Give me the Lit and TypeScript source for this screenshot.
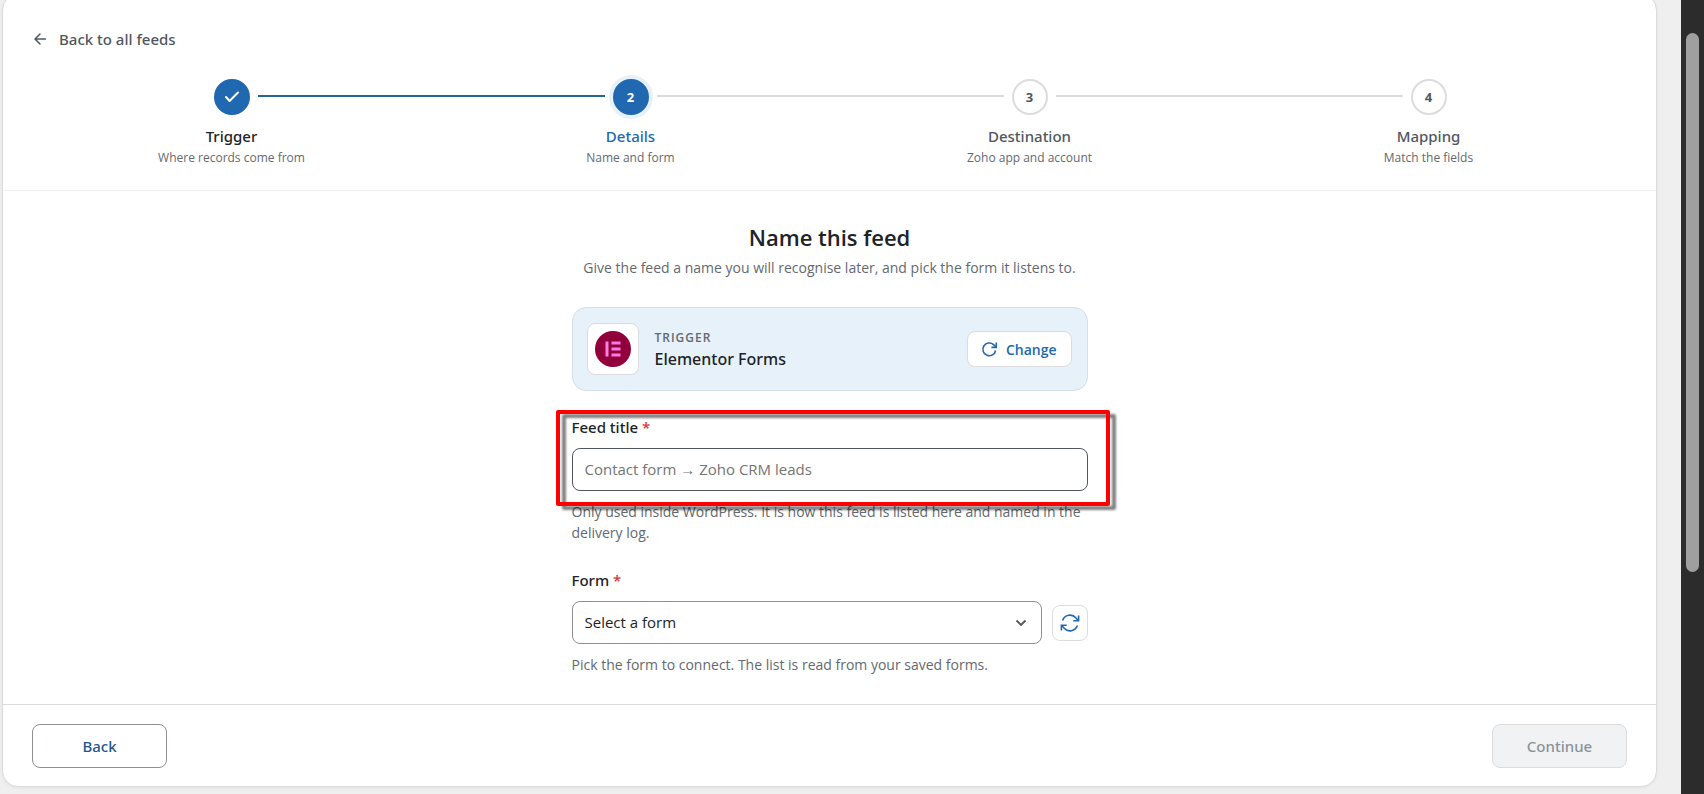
import { LitElement, html, css, nothing } from "lit";
import { customElement } from "lit/decorators.js";
import { classMap } from "lit/directives/class-map.js";

interface Step {
  title: string;
  hint: string;
  state: "done" | "current" | "todo";
}

const STEPS: Step[] = [
  { title: "Trigger", hint: "Where records come from", state: "done" },
  { title: "Details", hint: "Name and form", state: "current" },
  { title: "Destination", hint: "Zoho app and account", state: "todo" },
  { title: "Mapping", hint: "Match the fields", state: "todo" },
];

@customElement("feed-steps")
class FeedSteps extends LitElement {
  static styles = css`
    :host { display: block; }
    .steps {
      display: grid;
      grid-template-columns: repeat(4, 1fr);
      margin: 0;
      padding: 0;
      list-style: none;
    }
    .step {
      display: grid;
      grid-template-columns: 1fr 36px 1fr;
      column-gap: 8px;
      justify-items: center;
      text-align: center;
    }
    .line {
      width: 100%;
      height: 2px;
      margin-top: 16px;
      background: #dcdcde;
    }
    .line.none { background: none; }
    .line.done { background: #256696; }
    .dot {
      box-sizing: border-box;
      display: flex;
      align-items: center;
      justify-content: center;
      width: 36px;
      height: 36px;
      border: 2px solid #dcdcde;
      border-radius: 50%;
      background: #fff;
      color: #50575e;
      font-size: 13px;
      font-weight: 700;
    }
    .done .dot, .current .dot {
      border-color: #2068b0;
      background: #2068b0;
      color: #fff;
    }
    .current .dot { box-shadow: 0 0 0 4px #e6f1fa; }
    .title, .hint { grid-column: 1 / -1; }
    .title {
      margin-top: 10px;
      font-family: "Noto Sans", sans-serif;
      font-size: 15px;
      font-weight: 500;
      line-height: 22px;
      color: #50575e;
    }
    .done .title { color: #1d2327; }
    .current .title { color: #2068b0; }
    .hint {
      font-size: 12px;
      line-height: 22px;
      color: #646970;
    }
  `;

  render() {
    return html`<ol class="steps">
      ${STEPS.map((s, i) => {
        const left = { line: true, none: i === 0, done: i > 0 && STEPS[i - 1].state === "done" };
        const right = { line: true, none: i === STEPS.length - 1, done: s.state === "done" };
        return html`<li
          class=${classMap({ step: true, [s.state]: true })}
          aria-current=${s.state === "current" ? "step" : nothing}
        >
          <span class=${classMap(left)}></span>
          <span class="dot">
            ${s.state === "done"
              ? html`<svg width="18" height="18" viewBox="0 0 18 18" fill="none" stroke="currentColor" stroke-width="2" stroke-linecap="round" stroke-linejoin="round"><path d="M3 9l3.600 4L15 4.500" /></svg>`
              : i + 1}
          </span>
          <span class=${classMap(right)}></span>
          <span class="title">${s.title}</span>
          <span class="hint">${s.hint}</span>
        </li>`;
      })}
    </ol>`;
  }
}

@customElement("app-root")
class AppRoot extends LitElement {
  static styles = css`
    :host {
      display: block;
      font-family: "Open Sans", "Noto Sans", sans-serif;
      font-size: 14px;
      color: #1d2327;
    }
    * { box-sizing: border-box; }
    button, input, select { font: inherit; }
    .page {
      display: flex;
      height: 100vh;
      overflow: hidden;
      background: #efefef;
    }
    .content {
      flex: 1;
      min-width: 0;
      margin-top: -6px;
      padding: 0 24px 0 2px;
    }
    .track {
      flex: none;
      width: 23px;
      padding: 33px 5px 0;
      background: #2c2c2c;
    }
    .thumb {
      height: 539px;
      border-radius: 7px;
      background: #9f9f9f;
    }
    .card {
      border: 1px solid #dcdcde;
      border-radius: 16px;
      background: #fff;
      box-shadow: 0 1px 3px rgba(0, 0, 0, 0.06);
    }
    .head {
      padding: 32px 28px 21px 29px;
      border-bottom: 1px solid #f0f0f1;
    }
    .back-link {
      display: inline-flex;
      align-items: center;
      gap: 10px;
      height: 24px;
      margin-bottom: 28px;
      color: #50575e;
      font-family: "Noto Sans", sans-serif;
      font-size: 15px;
      font-weight: 500;
      line-height: 24px;
      text-decoration: none;
    }
    .body {
      display: flex;
      flex-direction: column;
      width: 100%;
      max-width: 516px;
      margin: 0 auto;
      padding: 29px 0;
    }
    h1 {
      margin: 0;
      font-size: 22px;
      font-weight: 600;
      line-height: 34px;
      text-align: center;
    }
    .lead {
      margin: 3px 0 28px;
      line-height: 22px;
      text-align: center;
      color: #646970;
    }
    .trigger {
      display: flex;
      align-items: center;
      gap: 16px;
      margin-bottom: 25px;
      padding: 15px 15px 15px 14px;
      border: 1px solid #d5dfe9;
      border-radius: 14px;
      background: #e6f1fa;
    }
    .logo {
      display: flex;
      align-items: center;
      justify-content: center;
      width: 52px;
      height: 52px;
      border: 1px solid #dcdcde;
      border-radius: 8px;
      background: #fff;
    }
    .names { flex: 1; }
    .kicker {
      font-size: 12px;
      font-weight: 600;
      line-height: 20px;
      letter-spacing: 1px;
      color: #646970;
    }
    .name {
      font-family: "Noto Sans", sans-serif;
      font-size: 16px;
      font-weight: 500;
      line-height: 22px;
    }
    .change, .refresh {
      display: flex;
      align-items: center;
      justify-content: center;
      height: 36px;
      border: 1px solid #dcdcde;
      border-radius: 8px;
      background: #fff;
      color: #2068b0;
    }
    .change {
      gap: 8px;
      padding: 0 14px 0 13px;
      font-weight: 600;
    }
    .refresh {
      flex: none;
      width: 36px;
      padding: 0;
    }
    .label {
      display: block;
      margin-bottom: 10px;
      font-family: "Noto Sans", sans-serif;
      font-size: 15px;
      font-weight: 500;
      line-height: 22px;
    }
    .req { color: #d63638; }
    .highlight { position: relative; }
    .marker {
      position: absolute;
      inset: -6px -22px -15px -16px;
      border: 4px solid #fe0000;
      border-radius: 2px;
      filter: drop-shadow(6px 4px 1px rgba(0, 0, 0, 0.5));
      pointer-events: none;
    }
    .field {
      display: block;
      width: 100%;
      height: 43px;
      border: 1px solid #50575e;
      border-radius: 8px;
      background: #fff;
      color: #1d2327;
      padding: 0 12px 1px;
      font-size: 15px;
    }
    .field::placeholder { color: #757575; opacity: 1; }
    .help {
      margin: 10px 0 0;
      line-height: 21px;
      color: #646970;
    }
    .form-label { margin-top: 26px; }
    .row {
      display: flex;
      align-items: center;
      gap: 10px;
    }
    .select-wrap {
      display: grid;
      flex: 1;
      align-items: center;
    }
    .select-wrap > * { grid-area: 1 / 1; }
    .select {
      appearance: none;
      border-color: #8c8f94;
    }
    .chevron {
      justify-self: end;
      margin-right: 13px;
      color: #50575e;
      pointer-events: none;
    }
    .foot {
      display: flex;
      justify-content: space-between;
      padding: 19px 29px 18px;
      border-top: 1px solid #dcdcde;
    }
    .nav {
      width: 135px;
      height: 44px;
      border: 1px solid #8c8f94;
      border-radius: 8px;
      background: #fff;
      color: #1f558c;
      font-family: "Noto Sans", sans-serif;
      font-size: 15px;
      font-weight: 500;
    }
    .nav:disabled {
      border-color: #dcdcde;
      background: #f0f2f4;
      color: #8c9299;
    }
  `;

  render() {
    return html`<div class="page">
      <main class="content">
        <div class="card">
          <div class="head">
            <a class="back-link" href="#feeds">
              <svg width="17" height="17" viewBox="0 0 17 17" fill="none" stroke="currentColor" stroke-width="1.500" stroke-linecap="round" stroke-linejoin="round"><path d="M13.500 8H3M8 3L3 8l5 5" /></svg>
              Back to all feeds
            </a>
            <feed-steps></feed-steps>
          </div>
          <div class="body">
            <h1>Name this feed</h1>
            <p class="lead">Give the feed a name you will recognise later, and pick the form it listens to.</p>
            <section class="trigger">
              <div class="logo">
                <svg width="36" height="36" viewBox="0 0 36 36"><circle cx="18" cy="18" r="18" fill="#92003b" /><path fill="#ff7be5" d="M10.500 10.500h3v15h-3zM16.500 10.500h9v3h-9zM16.500 16.500h9v3h-9zM16.500 22.500h9v3h-9z" /></svg>
              </div>
              <div class="names">
                <div class="kicker">TRIGGER</div>
                <div class="name">Elementor Forms</div>
              </div>
              <button class="change" type="button">
                <svg width="17" height="17" viewBox="0 0 17 17" fill="none" stroke="currentColor" stroke-width="1.600"><path d="M14.600 9.500A6.400 6.400 0 1 1 12.600 3.600L15 6" /><path d="M15.300 1.500V6.400H10.400" /></svg>
                Change
              </button>
            </section>
            <div class="highlight">
              <label class="label" for="feed-title">Feed title <span class="req">*</span></label>
              <input class="field" id="feed-title" type="text" placeholder="Contact form → Zoho CRM leads" />
              <div class="marker"></div>
            </div>
            <p class="help">Only used inside WordPress. It is how this feed is listed here and named in the delivery log.</p>
            <label class="label form-label" for="form">Form <span class="req">*</span></label>
            <div class="row">
              <div class="select-wrap">
                <select class="field select" id="form"><option>Select a form</option></select>
                <svg class="chevron" width="16" height="16" viewBox="0 0 16 16" fill="none" stroke="currentColor" stroke-width="1.800"><path d="M3.500 5.500l4.500 4.500 4.500-4.500" /></svg>
              </div>
              <button class="refresh" type="button" aria-label="Refresh forms">
                <svg width="20" height="20" viewBox="0 0 20 20" fill="none" stroke="currentColor" stroke-width="1.600"><path d="M2.600 7.500A7.800 7.800 0 0 1 16 5L18 7.200M17.400 12.500A7.800 7.800 0 0 1 4 15L2 12.800" /><path d="M18.600 2.500V7.800H13.300M1.400 17.500V12.200H6.700" /></svg>
              </button>
            </div>
            <p class="help">Pick the form to connect. The list is read from your saved forms.</p>
          </div>
          <footer class="foot">
            <button class="nav" type="button">Back</button>
            <button class="nav" type="button" disabled>Continue</button>
          </footer>
        </div>
      </main>
      <div class="track"><div class="thumb"></div></div>
    </div>`;
  }
}
